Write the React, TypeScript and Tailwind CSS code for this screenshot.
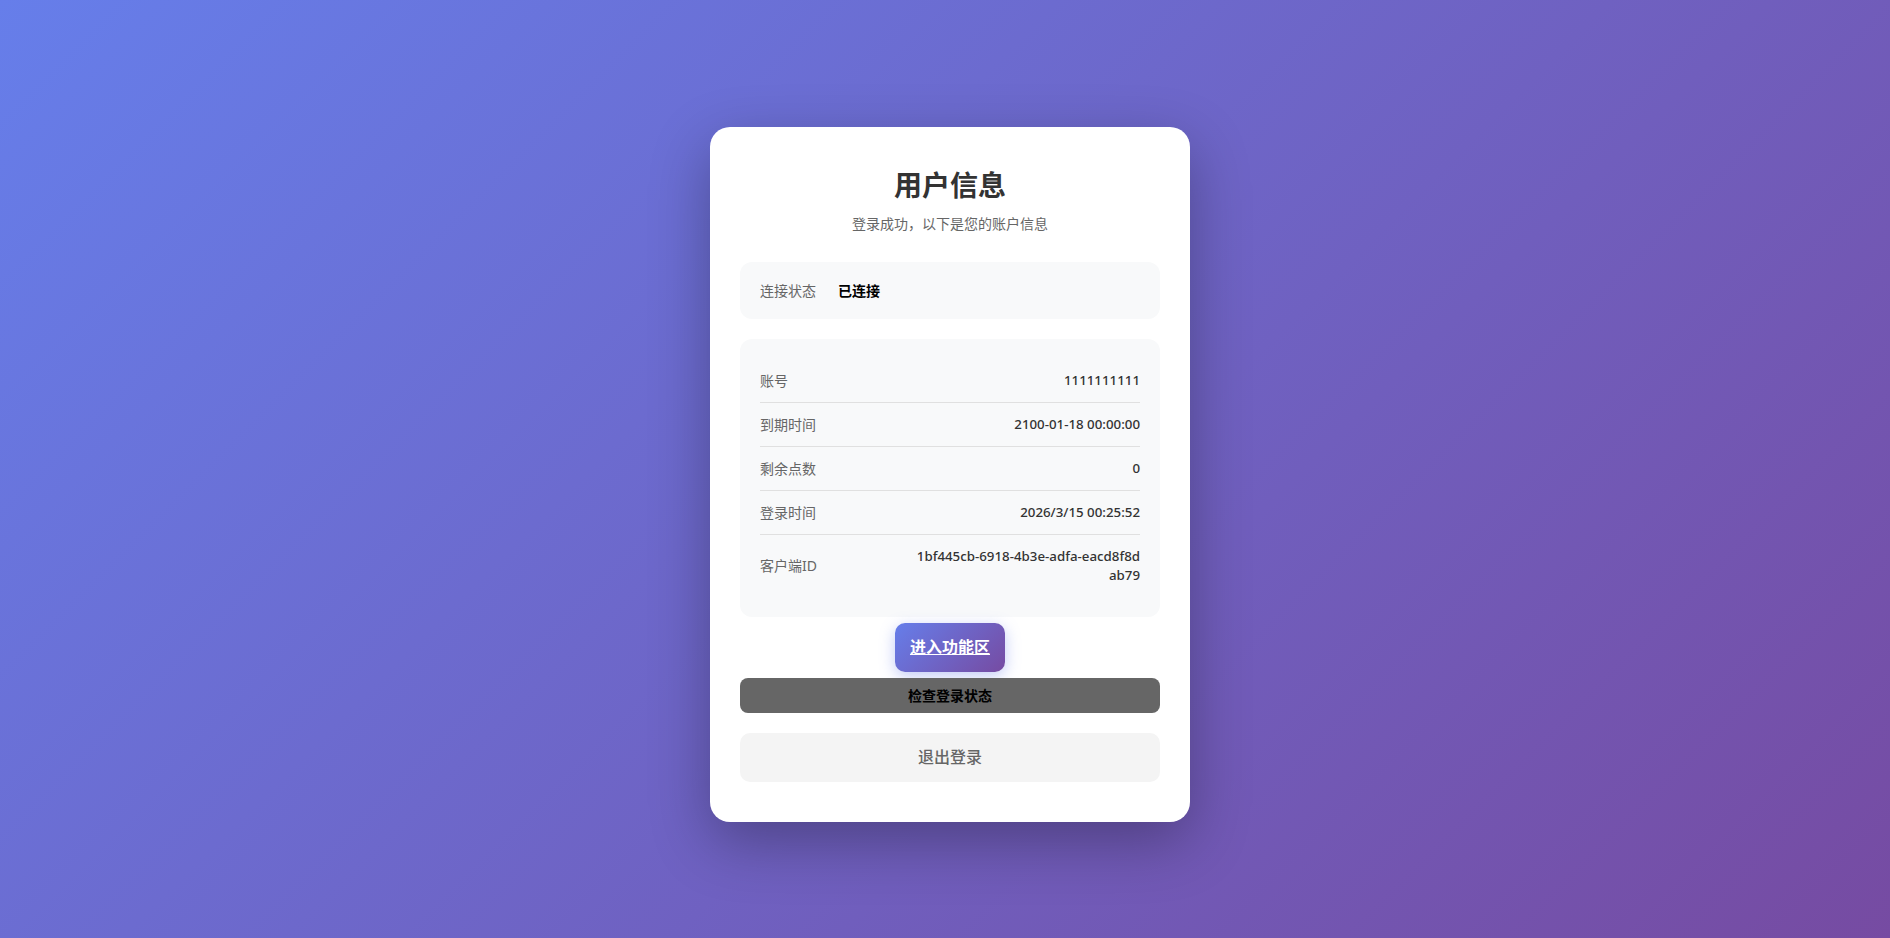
import React from 'react';

const rows: { label: string; value: string }[] = [
  { label: '账号', value: '1111111111' },
  { label: '到期时间', value: '2100-01-18 00:00:00' },
  { label: '剩余点数', value: '0' },
  { label: '登录时间', value: '2026/3/15 00:25:52' },
  { label: '客户端ID', value: '1bf445cb-6918-4b3e-adfa-eacd8f8dab79' },
];

const font = { fontFamily: '"Noto Sans", "Noto Sans CJK SC", sans-serif' };

const App: React.FC = () => {
  return (
    <div
      className="min-h-screen w-full flex items-center justify-center pt-[10px] pl-[10px] bg-[linear-gradient(135deg,#667eea_0%,#764ba2_100%)]"
      style={font}
    >
      <div className="w-[480px] bg-white rounded-[20px] px-[30px] pt-[40px] pb-[40px] shadow-[0_20px_60px_rgba(0,0,0,0.3)]">
        <div className="text-center mb-[28px]">
          <h1 className="text-[28px] leading-[36px] font-bold text-[#333] mb-[10px]">用户信息</h1>
          <p className="text-[14px] leading-[21px] text-[#666]">登录成功，以下是您的账户信息</p>
        </div>

        <div className="bg-[#f8f9fa] rounded-[12px] px-5 h-[57px] flex items-center text-[14px] mb-5">
          <span className="text-[#666] mr-[22px]">连接状态</span>
          <span className="font-bold text-black">已连接</span>
        </div>

        <div className="bg-[#f8f9fa] rounded-[12px] px-5 py-5">
          {rows.map((r, i) => (
            <div
              key={r.label}
              className={`flex justify-between items-center py-3 text-[14px] leading-[19px] ${
                i < rows.length - 1 ? 'border-b border-[#e0e0e0]' : ''
              }`}
            >
              <span className="text-[#666] shrink-0">{r.label}</span>
              <span className="text-[#333] text-[13.3px] font-medium text-right max-w-[226px] break-all">{r.value}</span>
            </div>
          ))}
        </div>

        <div className="flex justify-center mt-[6px]">
          <a
            href="#"
            className="inline-flex items-center justify-center h-[49px] px-[15px] rounded-[10px] text-white text-[16px] font-bold underline bg-[linear-gradient(135deg,#667eea_0%,#764ba2_100%)] shadow-[0_4px_15px_rgba(102,126,234,0.4)]"
          >
            进入功能区
          </a>
        </div>

        <button className="w-full h-[35px] mt-[6px] rounded-[8px] bg-[#666666] text-black text-[14px] font-bold">
          检查登录状态
        </button>

        <button className="w-full h-[49px] mt-5 rounded-[10px] bg-[#f4f4f4] text-[#666] text-[16px] font-medium">
          退出登录
        </button>
      </div>
    </div>
  );
};

export default App;
